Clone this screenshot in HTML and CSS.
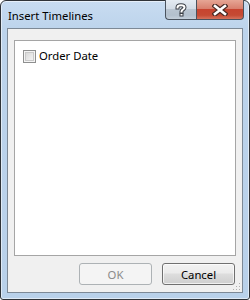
FILE: index.html
```html
<!DOCTYPE html>
<html>
<head>
<meta charset="utf-8">
<link rel="stylesheet" href="styles.css">
</head>
<body>
<div class="window">
  <div class="titlebar">
    <span class="title">Insert Timelines</span>
    <div class="caption-buttons">
      <div class="cap-btn help">
        <svg width="12" height="14" viewBox="0 0 12 14">
          <path d="M2.5 4.5 C2.5 1.5 9.5 1.5 9.5 4.5 C9.5 6.5 6.5 6.5 6.5 8.5" fill="none" stroke="#3a3f46" stroke-width="4" stroke-linecap="square"/>
          <rect x="4.5" y="10" width="4" height="3.5" fill="#3a3f46"/>
          <path d="M2.5 4.5 C2.5 1.5 9.5 1.5 9.5 4.5 C9.5 6.5 6.5 6.5 6.5 8.5" fill="none" stroke="#ffffff" stroke-width="2" stroke-linecap="square"/>
          <rect x="5.5" y="11" width="2" height="1.5" fill="#ffffff"/>
        </svg>
      </div>
      <div class="cap-btn close">
        <svg width="16" height="12" viewBox="0 0 16 12">
          <path d="M3 2 L13 10 M13 2 L3 10" stroke="#4a2a24" stroke-width="5" stroke-linecap="square"/>
          <path d="M3 2 L13 10 M13 2 L3 10" stroke="#ffffff" stroke-width="2.6" stroke-linecap="square"/>
        </svg>
      </div>
    </div>
  </div>
  <div class="client">
    <div class="listbox">
      <label class="item">
        <span class="checkbox"></span>
        <span class="item-text">Order Date</span>
      </label>
    </div>
    <div class="button-row">
      <button class="btn disabled" disabled>OK</button>
      <button class="btn">Cancel</button>
    </div>
    <svg class="grip" width="8" height="8" viewBox="0 0 8 8">
      <rect x="6" y="0" width="1" height="1" fill="#b0b0b0"/>
      <rect x="3" y="3" width="1" height="1" fill="#b0b0b0"/>
      <rect x="6" y="3" width="1" height="1" fill="#b0b0b0"/>
      <rect x="0" y="6" width="1" height="1" fill="#b0b0b0"/>
      <rect x="3" y="6" width="1" height="1" fill="#b0b0b0"/>
      <rect x="6" y="6" width="1" height="1" fill="#b0b0b0"/>
    </svg>
  </div>
</div>
</body>
</html>
```

FILE: styles.css
```css
html, body {
  margin: 0;
  padding: 0;
  background: #ffffff;
}

body {
  font-family: "Noto Sans", "Open Sans", sans-serif;
  font-size: 11.3px;
  color: #000000;
}

.window {
  box-sizing: border-box;
  width: 250px;
  height: 300px;
  border: 1px solid #2f3338;
  border-radius: 6px 6px 3px 3px;
  background: linear-gradient(#c8dcf1 0px, #bcd3eb 30px, #b9d1ea 100%);
  box-shadow: inset 0 0 0 1px rgba(255, 255, 255, 0.55);
  padding: 0 6px 6px 6px;
  display: flex;
  flex-direction: column;
}

.titlebar {
  height: 27px;
  display: flex;
  align-items: flex-start;
  justify-content: space-between;
}

.title {
  padding: 7px 0 0 1px;
  line-height: 15px;
}

.caption-buttons {
  display: flex;
  margin-top: -1px;
  margin-right: -1px;
}

.cap-btn {
  box-sizing: border-box;
  height: 20px;
  border: 1px solid #4a535e;
  border-top: none;
  display: flex;
  align-items: center;
  justify-content: center;
}

.help {
  width: 31px;
  border-radius: 0 0 0 4px;
  border-right: none;
  background: linear-gradient(#e4ebf2 0%, #d3dce6 45%, #b9c5d1 50%, #b3c0cd 80%, #c4cfda 100%);
}

.close {
  width: 48px;
  border-radius: 0 0 4px 0;
  background: linear-gradient(#e6a695 0%, #d8806e 45%, #c7442f 50%, #c54a33 80%, #d5725c 100%);
}

.client {
  position: relative;
  flex: 1;
  border: 1px solid #7d8996;
  background: #f0f0f0;
  display: flex;
  flex-direction: column;
  padding: 11px 6px 7px 6px;
}

.listbox {
  flex: 1;
  background: #ffffff;
  border: 1px solid #a5a5a5;
  padding: 9px 8px;
}

.item {
  display: flex;
  align-items: center;
  gap: 3px;
}

.checkbox {
  box-sizing: border-box;
  width: 13px;
  height: 13px;
  border: 1px solid #8e8f8f;
  background: linear-gradient(135deg, #d2d2d2 0%, #eaeaea 60%, #f8f8f8 100%);
  box-shadow: inset 0 0 0 1px #f4f4f4, inset 0 0 0 2px #c9c9c9;
}

.item-text {
  line-height: 13px;
  margin-top: -2px;
}

.button-row {
  display: flex;
  justify-content: flex-end;
  gap: 10px;
  margin-top: 7px;
  padding-right: 1px;
}

.btn {
  box-sizing: border-box;
  width: 73px;
  height: 22px;
  font-family: inherit;
  font-size: 11.3px;
  color: #000000;
  border: 1px solid #707070;
  border-radius: 3px;
  background: linear-gradient(#f2f2f2 0%, #ebebeb 45%, #dddddd 50%, #cfcfcf 100%);
  box-shadow: inset 0 0 0 1px rgba(255, 255, 255, 0.7);
  padding: 0;
}

.btn.disabled {
  color: #8b8b8b;
  border-color: #adb2b5;
  background: #f4f4f4;
  box-shadow: none;
}

.grip {
  position: absolute;
  right: 1px;
  bottom: 1px;
}
```
